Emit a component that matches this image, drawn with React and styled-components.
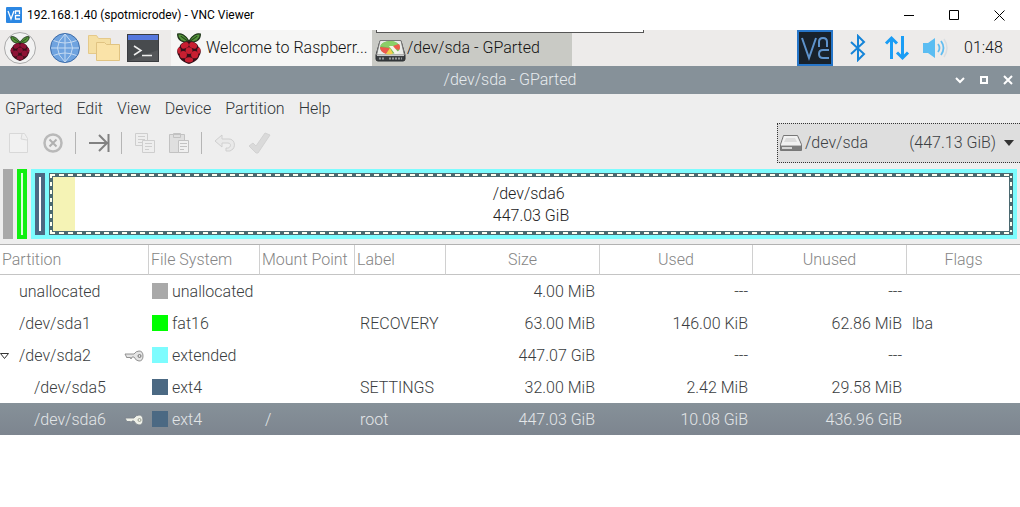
import React from "react";
import styled, { createGlobalStyle } from "styled-components";

const GlobalStyle = createGlobalStyle`
  * { box-sizing: border-box; }
  body { margin: 0; background: #fff; color: #2f3538; font: 300 16px/22px Roboto, "Liberation Sans", sans-serif; }
  button { font: inherit; color: inherit; border: 0; padding: 0; margin: 0; background: none; display: inline-flex; align-items: center; }
  svg { display: block; flex: none; }
`;

const ViewerBar = styled.header`
  display: flex; align-items: center; height: 30px; padding-left: 6px; gap: 5px;
  font: 400 12px/16px Roboto, "Liberation Sans", sans-serif; color: #000;
`;
const ViewerTitle = styled.h1`margin: 0; flex: 1; font: inherit;`;
const CaptionButtons = styled.div`display: flex; gap: 3px;`;
const CaptionButton = styled.button`&& { width: 42px; height: 28px; justify-content: center; }`;

const Panel = styled.nav`display: flex; height: 36px; background: #edebea; color: #111;`;
const Launchers = styled.div`display: flex; align-items: center; gap: 7px; width: 171px; padding-left: 4px;`;
const MenuButton = styled.button`&& { padding-right: 6px; }`;
const MenuIcon = styled.span`
  display: grid; place-items: center; width: 32px; height: 32px; border-radius: 50%; border: 1px solid #aaa; background: #f2f2f2;
`;
const Task = styled.button`
  && {
    width: ${(p) => (p.$active ? 200 : 201)}px; gap: ${(p) => (p.$active ? 1 : 4)}px; white-space: nowrap;
    padding-left: ${(p) => (p.$active ? 3 : 5)}px;
    background: ${(p) => (p.$active ? "#c9cac5" : "#f6f6f5")};
  }
`;
const ViewerTab = styled.div`
  position: absolute; left: 376px; top: 30px; width: 268px; height: 3px; background: #fff;
  border: 1px solid #555; border-top: 0;
`;
const Tray = styled.div`display: flex; align-items: center; margin-left: auto; padding-right: 17px;`;
const TrayButton = styled.button`&& { justify-content: center; width: ${(p) => p.$w}px; }`;
const Clock = styled.time`margin-left: 4px; width: 39px; white-space: nowrap;`;

const TitleBar = styled.div`
  display: grid; grid-template-columns: 80px 1fr 80px; align-items: center; height: 28px;
  background: #869199; color: #e6ebee; text-align: center;
`;
const WindowTitle = styled.h2`margin: 0; font: inherit;`;
const WindowButtons = styled.div`display: flex; justify-content: flex-end; gap: 12px; padding-right: 6px;`;

const Chrome = styled.div`background: #eeeeee; border-bottom: 1px solid #b2b2b2;`;
const MenuBar = styled.nav`display: flex; gap: 14px; height: 29px; padding-left: 5px;`;
const ToolRow = styled.div`display: flex; align-items: center; justify-content: space-between; height: 40px;`;
const Tools = styled.div`display: flex; align-items: center; padding-left: 7px;`;
const Tool = styled.button`&& { width: 24px; height: 28px; justify-content: center; margin-right: 10px; }`;
const Divider = styled.span`width: 1px; height: 22px; margin-right: 11px; background: #b5b5b5;`;
const DeviceButton = styled.button`
  && { width: 243px; height: 40px; gap: 2px; padding: 0 5px 0 1px; background: #dedede; border: 1px dotted #333; border-right: 0; color: #3c4043; }
`;
const DeviceSize = styled.span`margin-left: auto; margin-right: 6px;`;

const DiskMap = styled.section`display: flex; gap: 4px; height: 81px; padding: 6px 3px 5px;`;
const Block = styled.div`width: 10px; flex: none; padding: 4px; background: ${(p) => p.$color};`;
const BlockFill = styled.div`height: 100%; background: ${(p) => p.$color || "#fff"};`;
const Extended = styled.div`display: flex; flex: 1; gap: 4px; padding: 4px; background: #7dfcfe;`;
const Selected = styled.div`flex: 1; padding: 1px; background: #4b6970;`;
const Dashes = styled.div`
  height: 100%; padding: 2px;
  background:
    repeating-linear-gradient(90deg, #fffff0 0 5px, #4b6970 5px 9px) top / 100% 2px no-repeat,
    repeating-linear-gradient(90deg, #fffff0 0 5px, #4b6970 5px 9px) bottom / 100% 2px no-repeat,
    repeating-linear-gradient(180deg, #fffff0 0 4px, #4b6970 4px 8px) left / 2px 100% no-repeat,
    repeating-linear-gradient(180deg, #fffff0 0 4px, #4b6970 4px 8px) right / 2px 100% no-repeat;
`;
const Usage = styled.div`
  display: grid; place-content: center; height: 100%; padding-top: 2px;
  border: 1px solid #4b6970; color: #222; background: linear-gradient(90deg, #f5f3b5 22px, #fff 22px);
`;

const Table = styled.table`width: 100%; table-layout: fixed; border-collapse: separate; border-spacing: 0;`;
const Head = styled.th`
  height: 30px; padding: 1px 4px 0 ${(p) => (p.$center ? 4 : 2)}px; font-weight: 300; white-space: nowrap;
  text-align: ${(p) => (p.$center ? "center" : "left")}; color: #858585;
  border-bottom: 1px solid #c4c4c4;
  border-right: ${(p) => (p.$last ? 0 : 1)}px solid #d0d0d0;
`;
const Row = styled.tr`
  color: ${(p) => (p.$selected ? "#e3e6e8" : "#3a3d40")};
  background: ${(p) => (p.$selected ? "linear-gradient(#869199, #7d858f)" : "#fff")};
`;
const Cell = styled.td`
  height: 32px; padding: 2px 5px 0; white-space: nowrap; text-align: ${(p) => (p.$right ? "right" : "left")};
`;
const Name = styled.div`display: flex; align-items: center; margin: 0 -5px; padding-right: 5px;`;
const Expander = styled.span`width: ${(p) => (p.$child ? 34 : 19)}px;`;
const KeySlot = styled.span`margin-left: auto;`;
const System = styled.div`display: flex; align-items: center; gap: 4px; margin-left: -2px;`;
const Swatch = styled.span`width: 16px; height: 16px; margin-bottom: 2px; background: ${(p) => p.$color};`;

const Raspberry = ({ w, h, dark }) => {
  const c = dark ? "#8e1235" : "#c81f31";
  return (
    <svg width={w} height={h} viewBox="0 0 24 30" aria-hidden="true">
      <path d="M12 8C9 2 4 0 1 1c0 5 4 8 11 8zM12 8c3-6 8-8 11-7 0 5-4 8-11 8z" fill="#55963b" stroke="#20361b" strokeWidth="1.2" />
      <path d="M4 3l7 5M20 3l-7 5" stroke="#24451b" strokeWidth="1" />
      <path d="M12 8c5 0 8 2 9 5 3 3 3 6 1 9-1 4-6 7-10 8-4-1-9-4-10-8-2-3-2-6 1-9 1-3 4-5 9-5z" fill="#37101a" />
      <g fill={c}>
        <ellipse cx="8" cy="12" rx="4" ry="2.8" transform="rotate(-25 8 12)" />
        <ellipse cx="16" cy="12" rx="4" ry="2.8" transform="rotate(25 16 12)" />
        <circle cx="12" cy="17" r="3.3" />
        <circle cx="6.5" cy="21" r="3.5" />
        <circle cx="17.5" cy="21" r="3.5" />
        <ellipse cx="2.5" cy="17" rx="1.6" ry="3" />
        <ellipse cx="21.5" cy="17" rx="1.6" ry="3" />
        <ellipse cx="12" cy="26" rx="4" ry="2.6" />
      </g>
    </svg>
  );
};

const Globe = () => (
  <svg width="32" height="32" viewBox="0 0 32 32" aria-hidden="true">
    <circle cx="16" cy="16" r="14.5" fill="#6fa3df" stroke="#3c6ba8" />
    <path d="M16 2v28M2 16h28M4.5 8.5q11.5 5 23 0M4.5 23.5q11.5-5 23 0M16 2q-15 14 0 28M16 2q15 14 0 28" fill="none" stroke="#c4daf2" />
  </svg>
);
const Folders = () => (
  <svg width="32" height="28" viewBox="0 0 32 28" aria-hidden="true">
    <path d="M.5 1.500h8l2 3h12v15h-22z" fill="#f5dfa3" stroke="#e5c98a" />
    <path d="M8.500 8.500h8l2 2h13v16h-23z" fill="#fae3a8" stroke="#e0c382" />
  </svg>
);
const Terminal = () => (
  <svg width="32" height="28" viewBox="0 0 32 28" aria-hidden="true">
    <rect x=".5" y=".5" width="31" height="27" fill="#484b4e" stroke="#3a3c40" />
    <path d="M31 5v11L1 27h30z" fill="#55575a" />
    <path d="M1 1h30v5H1z" fill="#5577dd" />
    <path d="M7 12l7 4.500-7 4.500M15 21.500h10" fill="none" stroke="#eee" strokeWidth="1.5" />
  </svg>
);
const GPartedIcon = () => (
  <svg width="31" height="28" viewBox="0 -5 31 28" aria-hidden="true">
    <path d="M5 2h21l4 14v4q0 2-2 2H3q-2 0-2-2v-4z" fill="#3b3f42" stroke="#292c2e" />
    <path d="M5 1.500h21l3.500 14.500h-28z" fill="#e9ebe8" stroke="#777" />
    <ellipse cx="15" cy="8.500" rx="10" ry="6.500" fill="#75bb54" />
    <path d="M15 9L5.500 7Q6 3 15 2q6 0 8 3z" fill="#8bcf68" />
    <path d="M15 9L5 8q0 5 6 7z" fill="#ee594c" />
    <path d="M15 8l9-3q2 3 0 6z" fill="#ee594c" />
    <path d="M15 9l-4 6q4 1 7-.5z" fill="#f3cf4d" />
    <path d="M14 7h4l6 7-4 1z" fill="#f6f5e9" />
    <path d="M2 16.500h27" stroke="#c8caca" />
    <path d="M4 19.500h6M14 19.500h13" stroke="#969b9c" strokeWidth="2" strokeDasharray="2 1" />
  </svg>
);
const Drive = () => (
  <svg width="24" height="18" viewBox="0 0 24 18" aria-hidden="true">
    <path d="M4.500 1.500h14l4 9v6H1.500v-6z" fill="#bfbfbf" stroke="#777" />
    <path d="M5 2h13l4 9H2z" fill="#f1f1f1" />
    <path d="M7 4h9l2 4H5z" fill="#dcdcdc" />
    <path d="M2 12h20v4H2z" fill="#7d7d7d" />
    <path d="M3 14h10" stroke="#d5d5d5" strokeWidth="2" />
  </svg>
);
const VncSmall = () => (
  <svg width="16" height="16" viewBox="0 0 16 16" aria-hidden="true">
    <rect width="16" height="16" rx="1" fill="#2b87e3" />
    <path d="M2 4l3 8 3-8M9.500 7V4h4v3M14 8.500H9.500V12H14" fill="none" stroke="#fff" strokeWidth="1.3" />
  </svg>
);
const VncTray = () => (
  <svg width="36" height="36" viewBox="0 0 36 36" aria-hidden="true">
    <rect x="1" y="1" width="34" height="34" fill="#18222c" stroke="#2675c8" strokeWidth="2" />
    <path d="M5 8l7 20 7-20M22 17v-5q0-4 4-4t4 4v5M32 20h-6q-4 0-4 4t4 4h6" fill="none" stroke="#5e93cc" strokeWidth="2" />
  </svg>
);
const Bluetooth = () => (
  <svg width="16" height="28" viewBox="0 0 16 28" aria-hidden="true">
    <path d="M1 8l13 12-6 6V2l6 6L1 20" fill="none" stroke="#1584d8" strokeWidth="2" />
  </svg>
);
const Network = () => (
  <svg width="26" height="26" viewBox="0 0 26 26" aria-hidden="true">
    <path d="M7.500 24V3M2 8.500L7.500 3 13 8.500M18.500 1v21M13 17.500l5.500 5.500 5.500-5.500" fill="none" stroke="#1a9df5" strokeWidth="3" />
  </svg>
);
const Volume = () => (
  <svg width="26" height="22" viewBox="0 0 26 22" aria-hidden="true">
    <path d="M1 6h5l7-5v20l-7-5H1z" fill="#5bbdf2" />
    <path d="M16 7q3 4 0 8M19 4q5 7 0 14" fill="none" stroke="#62bdf0" strokeWidth="1.8" />
    <path d="M22 2q6 9 0 18" fill="none" stroke="#d9dee2" strokeWidth="1.5" />
  </svg>
);
const Key = ({ light }) => (
  <svg width="20" height="12" viewBox="0 0 20 12" role="img" aria-label="Mounted">
    <path d="M1 4h9q2-3 5-3 4 0 4 5t-4 5q-3 0-5-4H8l-1 2-1-2-1 1-1-1-1 1z" fill={light ? "#eef0e8" : "#e4e4e4"} stroke={light ? "#7d858c" : "#888"} strokeWidth=".9" />
    <circle cx="15.5" cy="6" r="1.5" fill="none" stroke={light ? "#9ca092" : "#777"} />
  </svg>
);

const toolIcons = {
  New: <svg width="22" height="22" viewBox="0 0 22 22"><path d="M1.500 1.500h15l3 5v14h-18zM14 2l-1 5 6 1" fill="#f1f1f1" stroke="#d8d8d8" /></svg>,
  Delete: <svg width="20" height="20" viewBox="0 0 20 20"><circle cx="10" cy="10" r="8.5" fill="none" stroke="#b9b9b9" strokeWidth="2.5" /><path d="M6.500 6.500l7 7M13.500 6.500l-7 7" stroke="#b0b0b0" strokeWidth="2" /></svg>,
  Resize: <svg width="22" height="20" viewBox="0 0 22 20"><path d="M1 10h18M11 2l8 8-8 8M20.500 1v18" fill="none" stroke="#818181" strokeWidth="2" /></svg>,
  Copy: <svg width="20" height="22" viewBox="0 0 20 22"><g fill="#eee" stroke="#cecece"><path d="M.5 1.500h12v12H.5zM3 4.500h7M3 7.500h7M3 10.500h7" /><path d="M7.500 8.500h12v12h-12zM10 11.500h7M10 14.500h7M10 17.500h4" /></g></svg>,
  Paste: <svg width="22" height="22" viewBox="0 0 22 22"><g fill="#dfdfdf" stroke="#c2c2c2"><path d="M1.500 2.500h15v18h-15zM5.500 1.500h7v4h-7z" /><path d="M10.500 8.500h10v12h-10zM12 11.500h7M12 14.500h7M12 17.500h4" fill="#f0f0f0" /></g></svg>,
  Undo: <svg width="22" height="18" viewBox="0 0 22 18"><path d="M1 7l7-6v4h7c5 0 7 6 4 10l-3 2h-4v-3c5 1 6-5 2-5H8v4z" fill="#e9e9e9" stroke="#cfcfcf" /></svg>,
  Apply: <svg width="23" height="23" viewBox="0 0 23 23"><path d="M1 14l4-3 3 3L17 1l5 2L10 21H8z" fill="#dadada" stroke="#d2d2d2" strokeLinejoin="round" /></svg>,
};

const toolGroups = [["New", "Delete"], ["Resize"], ["Copy", "Paste"], ["Undo", "Apply"]];

const columns = [
  ["Partition", 149], ["File System", 111], ["Mount Point", 95], ["Label", 91],
  ["Size", 154, true], ["Used", 153, true], ["Unused", 154, true], ["Flags", null, true],
];

const partitions = [
  { name: "unallocated", fs: "unallocated", color: "#a9a9a9", size: "4.00 MiB", used: "---", unused: "---" },
  { name: "/dev/sda1", fs: "fat16", color: "#00ff00", label: "RECOVERY", size: "63.00 MiB", used: "146.00 KiB", unused: "62.86 MiB", flags: "lba" },
  { name: "/dev/sda2", fs: "extended", color: "#7dfcfe", size: "447.07 GiB", used: "---", unused: "---", open: true, key: true },
  { name: "/dev/sda5", fs: "ext4", color: "#4b6983", label: "SETTINGS", size: "32.00 MiB", used: "2.42 MiB", unused: "29.58 MiB", child: true },
  { name: "/dev/sda6", fs: "ext4", color: "#4b6983", mount: "/", label: "root", size: "447.03 GiB", used: "10.08 GiB", unused: "436.96 GiB", child: true, key: true, selected: true },
];

export default function App() {
  return (
    <>
      <GlobalStyle />
      <ViewerBar>
        <VncSmall />
        <ViewerTitle>192.168.1.40 (spotmicrodev) - VNC Viewer</ViewerTitle>
        <CaptionButtons>
          <CaptionButton aria-label="Minimize"><svg width="11" height="11"><path d="M0 5.500h10" stroke="#000" /></svg></CaptionButton>
          <CaptionButton aria-label="Maximize"><svg width="11" height="11"><path d="M.5.5h9v9h-9z" fill="none" stroke="#000" /></svg></CaptionButton>
          <CaptionButton aria-label="Close"><svg width="11" height="11"><path d="M.5.5l10 10M10.500.5l-10 10" stroke="#000" /></svg></CaptionButton>
        </CaptionButtons>
      </ViewerBar>
      <ViewerTab />
      <Panel>
        <Launchers>
          <MenuButton aria-label="Menu"><MenuIcon><Raspberry w={20} h={25} dark /></MenuIcon></MenuButton>
          <button aria-label="Web Browser"><Globe /></button>
          <button aria-label="Files"><Folders /></button>
          <button aria-label="Terminal"><Terminal /></button>
        </Launchers>
        <Task><Raspberry w={26} h={31} />Welcome to Raspberr...</Task>
        <Task $active><GPartedIcon />/dev/sda - GParted</Task>
        <Tray>
          <TrayButton $w={36} aria-label="VNC Server"><VncTray /></TrayButton>
          <TrayButton $w={50} aria-label="Bluetooth"><Bluetooth /></TrayButton>
          <TrayButton $w={27} aria-label="Network"><Network /></TrayButton>
          <TrayButton $w={50} aria-label="Volume"><Volume /></TrayButton>
          <Clock>01:48</Clock>
        </Tray>
      </Panel>
      <TitleBar>
        <span />
        <WindowTitle>/dev/sda - GParted</WindowTitle>
        <WindowButtons>
          <button aria-label="Minimize window"><svg width="12" height="10"><path d="M2 3l4 4 4-4" fill="none" stroke="#fff" strokeWidth="2" /></svg></button>
          <button aria-label="Maximize window"><svg width="12" height="10"><path d="M3 2h6v6H3z" fill="none" stroke="#fff" strokeWidth="2" /></svg></button>
          <button aria-label="Close window"><svg width="12" height="10"><path d="M2 1l8 8M10 1l-8 8" stroke="#fff" strokeWidth="2" /></svg></button>
        </WindowButtons>
      </TitleBar>
      <Chrome>
        <MenuBar>
          {["GParted", "Edit", "View", "Device", "Partition", "Help"].map((m) => <button key={m}>{m}</button>)}
        </MenuBar>
        <ToolRow>
          <Tools>
            {toolGroups.map((group, i) => (
              <React.Fragment key={group[0]}>
                {i > 0 && <Divider />}
                {group.map((name) => <Tool key={name} aria-label={name}>{toolIcons[name]}</Tool>)}
              </React.Fragment>
            ))}
          </Tools>
          <DeviceButton aria-haspopup="listbox">
            <Drive />/dev/sda<DeviceSize>(447.13 GiB)</DeviceSize>
            <svg width="11" height="6"><path d="M0 0h10L5 6z" fill="#333" /></svg>
          </DeviceButton>
        </ToolRow>
        <DiskMap>
          <Block $color="#a9a9a9" />
          <Block $color="#11f011"><BlockFill $color="#d9ffd9" /></Block>
          <Extended>
            <Block $color="#4b6983"><BlockFill /></Block>
            <Selected><Dashes><Usage><span>/dev/sda6</span><span>447.03 GiB</span></Usage></Dashes></Selected>
          </Extended>
        </DiskMap>
      </Chrome>
      <Table>
        <colgroup>{columns.map(([n, w]) => <col key={n} width={w || undefined} />)}</colgroup>
        <thead>
          <tr>{columns.map(([n, , center]) => <Head key={n} $center={center} $last={n === "Flags"}>{n}</Head>)}</tr>
        </thead>
        <tbody>
          {partitions.map((p) => (
            <Row key={p.name} $selected={p.selected}>
              <Cell>
                <Name>
                  <Expander $child={p.child}>{p.open && <svg width="10" height="7"><path d="M.5.5h8l-4 5z" fill="#fff" stroke="#333" /></svg>}</Expander>
                  {p.name}
                  {p.key && <KeySlot><Key light={p.selected} /></KeySlot>}
                </Name>
              </Cell>
              <Cell><System><Swatch $color={p.color} />{p.fs}</System></Cell>
              <Cell>{p.mount}</Cell>
              <Cell>{p.label}</Cell>
              <Cell $right>{p.size}</Cell>
              <Cell $right>{p.used}</Cell>
              <Cell $right>{p.unused}</Cell>
              <Cell>{p.flags}</Cell>
            </Row>
          ))}
        </tbody>
      </Table>
    </>
  );
}
